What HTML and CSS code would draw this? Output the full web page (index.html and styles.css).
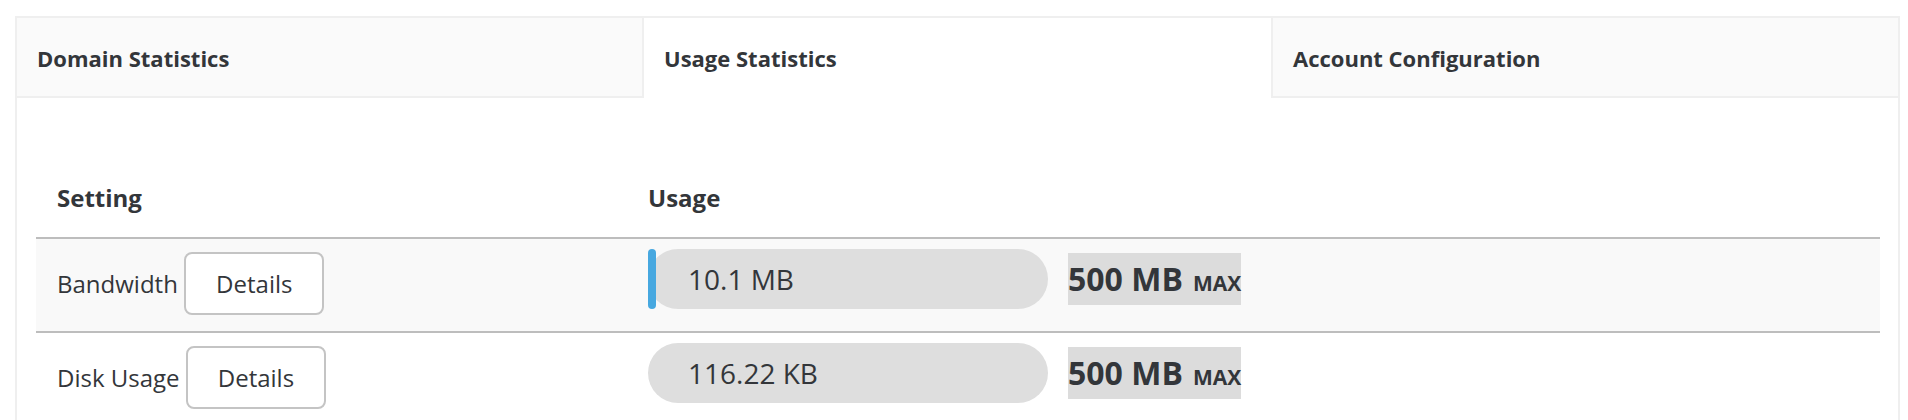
FILE: index.html
```html
<!DOCTYPE html>
<html lang="en">
<head>
<meta charset="utf-8">
<title>Usage Statistics</title>
<link rel="stylesheet" href="styles.css">
</head>
<body>
<div class="panel">
  <div class="tabs">
    <div class="tab tab-first">Domain Statistics</div>
    <div class="tab tab-active">Usage Statistics</div>
    <div class="tab tab-last">Account Configuration</div>
  </div>
  <div class="content">
    <div class="table">
      <div class="thead">
        <div class="th">Setting</div>
        <div class="th">Usage</div>
      </div>
      <div class="row row-striped">
        <div class="cell cell-setting"><span class="label">Bandwidth <button class="btn">Details</button></span></div>
        <div class="cell cell-usage">
          <div class="pill">
            <div class="pill-fill" style="width: 2.02%"></div>
            <span class="pill-text">10.1 MB</span>
          </div>
          <span class="max"><b class="max-val">500 MB</b><span class="max-unit">MAX</span></span>
        </div>
      </div>
      <div class="row">
        <div class="cell cell-setting"><span class="label">Disk Usage <button class="btn">Details</button></span></div>
        <div class="cell cell-usage">
          <div class="pill">
            <div class="pill-fill" style="width: 0%"></div>
            <span class="pill-text">116.22 KB</span>
          </div>
          <span class="max"><b class="max-val">500 MB</b><span class="max-unit">MAX</span></span>
        </div>
      </div>
    </div>
  </div>
</div>
</body>
</html>
```

FILE: styles.css
```css
html, body {
  margin: 0;
  padding: 0;
  background: #ffffff;
}

body {
  font-family: "Open Sans", "Noto Sans", "Liberation Sans", sans-serif;
  color: #33363a;
  overflow: hidden;
}

.panel {
  margin: 16px 8px 0 15px;
  border: 2px solid #efefef;
  border-bottom: none;
  height: 420px;
  box-sizing: border-box;
}

.tabs {
  display: grid;
  grid-template-columns: repeat(3, 1fr);
}

.tab {
  height: 80px;
  display: flex;
  align-items: center;
  padding-left: 20px;
  padding-top: 2px;
  box-sizing: border-box;
  font-size: 22px;
  font-weight: 700;
  background: #fafafa;
  border-bottom: 2px solid #efefef;
}

.tab-first {
  border-right: 2px solid #efefef;
}

.tab-active {
  background: #ffffff;
  border-bottom-color: transparent;
}

.tab-last {
  border-left: 2px solid #efefef;
}

.content {
  padding: 82px 18px 0 19px;
}

.thead,
.row {
  display: grid;
  grid-template-columns: 591px 1fr;
}

.thead {
  border-bottom: 2px solid #bdbdbd;
}

.th {
  padding: 0 21px 21px;
  font-size: 24px;
  font-weight: 700;
  line-height: 36px;
}

.row {
  height: 94px;
  box-sizing: border-box;
  border-bottom: 2px solid #bdbdbd;
}

.row-striped {
  background: #f9f9f9;
}

.cell {
  padding: 0 21px;
}

.cell-setting {
  display: flex;
  align-items: center;
  padding-bottom: 4px;
}

.label {
  font-size: 24px;
  line-height: 36px;
}

.btn {
  font-family: inherit;
  font-size: 24px;
  color: #33363a;
  line-height: 35px;
  padding: 12px 30px;
  background: #ffffff;
  border: 2px solid #c4c4c4;
  border-radius: 8px;
  vertical-align: baseline;
}

.cell-usage {
  display: flex;
  align-items: center;
  gap: 20px;
  padding-top: 10px;
  align-self: start;
}

.pill {
  position: relative;
  width: 400px;
  height: 60px;
  border-radius: 30px;
  background: #dedede;
  display: flex;
  align-items: center;
  box-sizing: border-box;
  padding-left: 40px;
}

.pill-fill {
  position: absolute;
  left: 0;
  top: 0;
  bottom: 0;
  background: #47a8e0;
  border-radius: 4px;
}

.pill-text {
  position: relative;
  font-size: 28px;
  line-height: 36px;
}

.max {
  display: inline-flex;
  align-items: baseline;
  gap: 10px;
  background: #dcdcdc;
  line-height: 52px;
  height: 52px;
  white-space: nowrap;
}

.max-val {
  font-size: 32px;
  font-weight: 700;
}

.max-unit {
  font-size: 21px;
  font-weight: 700;
}
```
